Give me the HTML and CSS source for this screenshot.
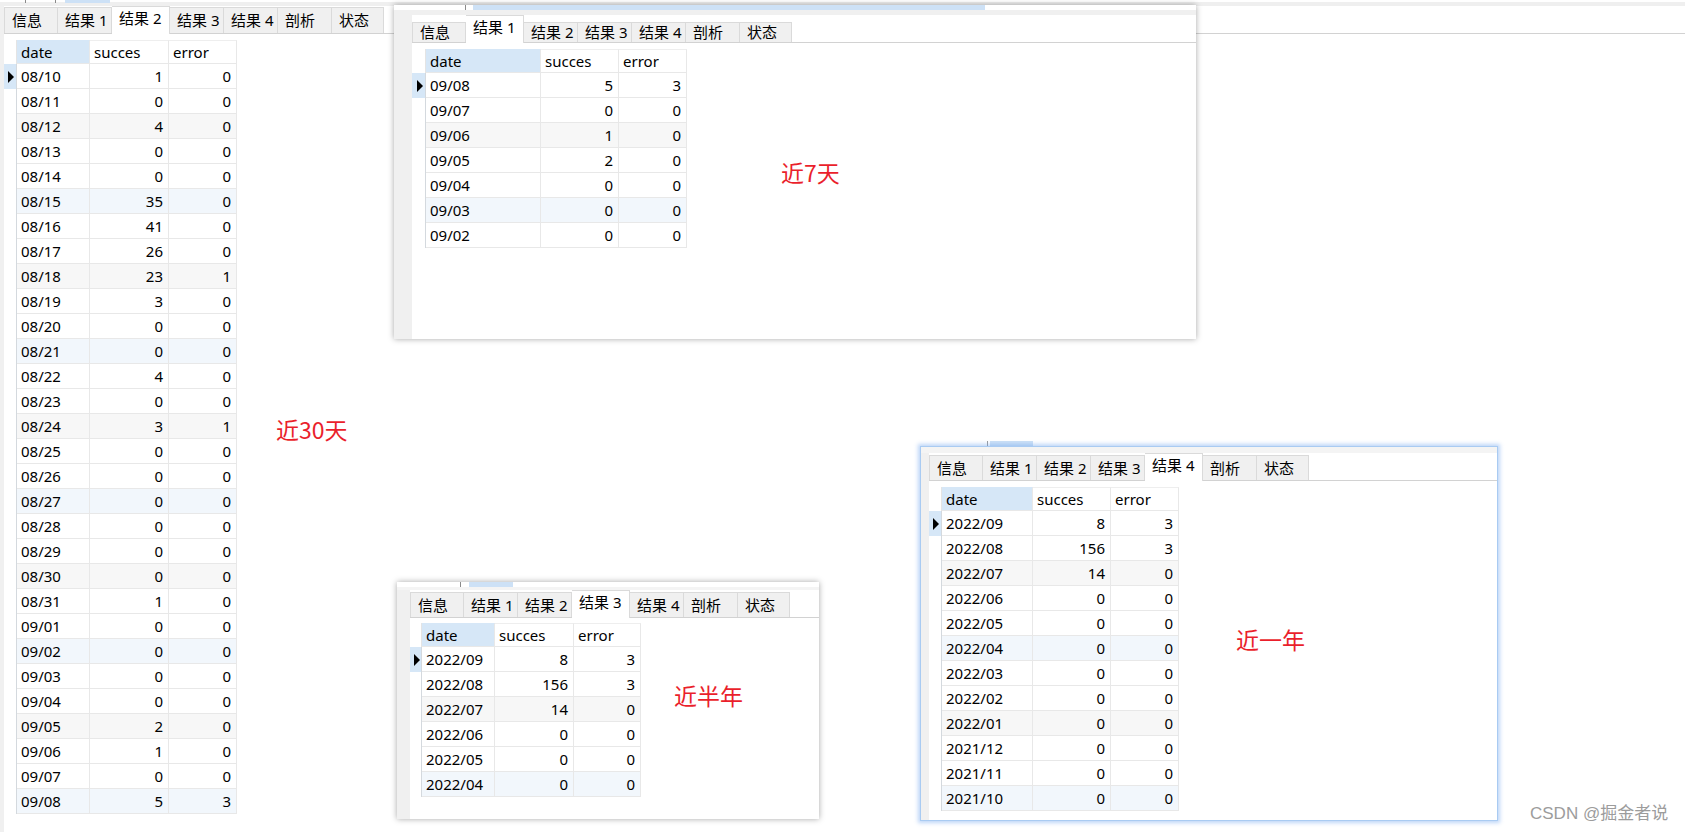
FILE: index.html
```html
<!DOCTYPE html>
<html lang="zh">
<head>
<meta charset="utf-8">
<title>查询结果</title>
<link rel="stylesheet" href="styles.css">
</head>
<body>
<div class="base">
  <div class="remnant">
    <span class="rm-line l1"></span><span class="rm-line l2"></span><span class="rm-blue b0"></span>
  </div>
  <div class="bbody">
    <div class="lstrip"></div>
    <div class="bmain">
      <div class="tabbar tb-base">
        <div class="tab">信息</div><div class="tab">结果 1</div><div class="tab on">结果 2</div><div class="tab">结果 3</div><div class="tab">结果 4</div><div class="tab">剖析</div><div class="tab last">状态</div>
      </div>
      <div class="tbl t30">
        <div class="row head"><div class="gut"></div><div class="c sel">date</div><div class="c">succes</div><div class="c">error</div></div>
        <div class="row"><div class="gut cur"><i class="arrow"></i></div><div class="c">08/10</div><div class="c n">1</div><div class="c n">0</div></div>
        <div class="row"><div class="gut"></div><div class="c">08/11</div><div class="c n">0</div><div class="c n">0</div></div>
        <div class="row sg"><div class="gut"></div><div class="c">08/12</div><div class="c n">4</div><div class="c n">0</div></div>
        <div class="row"><div class="gut"></div><div class="c">08/13</div><div class="c n">0</div><div class="c n">0</div></div>
        <div class="row"><div class="gut"></div><div class="c">08/14</div><div class="c n">0</div><div class="c n">0</div></div>
        <div class="row sb"><div class="gut"></div><div class="c">08/15</div><div class="c n">35</div><div class="c n">0</div></div>
        <div class="row"><div class="gut"></div><div class="c">08/16</div><div class="c n">41</div><div class="c n">0</div></div>
        <div class="row"><div class="gut"></div><div class="c">08/17</div><div class="c n">26</div><div class="c n">0</div></div>
        <div class="row sg"><div class="gut"></div><div class="c">08/18</div><div class="c n">23</div><div class="c n">1</div></div>
        <div class="row"><div class="gut"></div><div class="c">08/19</div><div class="c n">3</div><div class="c n">0</div></div>
        <div class="row"><div class="gut"></div><div class="c">08/20</div><div class="c n">0</div><div class="c n">0</div></div>
        <div class="row sb"><div class="gut"></div><div class="c">08/21</div><div class="c n">0</div><div class="c n">0</div></div>
        <div class="row"><div class="gut"></div><div class="c">08/22</div><div class="c n">4</div><div class="c n">0</div></div>
        <div class="row"><div class="gut"></div><div class="c">08/23</div><div class="c n">0</div><div class="c n">0</div></div>
        <div class="row sg"><div class="gut"></div><div class="c">08/24</div><div class="c n">3</div><div class="c n">1</div></div>
        <div class="row"><div class="gut"></div><div class="c">08/25</div><div class="c n">0</div><div class="c n">0</div></div>
        <div class="row"><div class="gut"></div><div class="c">08/26</div><div class="c n">0</div><div class="c n">0</div></div>
        <div class="row sb"><div class="gut"></div><div class="c">08/27</div><div class="c n">0</div><div class="c n">0</div></div>
        <div class="row"><div class="gut"></div><div class="c">08/28</div><div class="c n">0</div><div class="c n">0</div></div>
        <div class="row"><div class="gut"></div><div class="c">08/29</div><div class="c n">0</div><div class="c n">0</div></div>
        <div class="row sg"><div class="gut"></div><div class="c">08/30</div><div class="c n">0</div><div class="c n">0</div></div>
        <div class="row"><div class="gut"></div><div class="c">08/31</div><div class="c n">1</div><div class="c n">0</div></div>
        <div class="row"><div class="gut"></div><div class="c">09/01</div><div class="c n">0</div><div class="c n">0</div></div>
        <div class="row sb"><div class="gut"></div><div class="c">09/02</div><div class="c n">0</div><div class="c n">0</div></div>
        <div class="row"><div class="gut"></div><div class="c">09/03</div><div class="c n">0</div><div class="c n">0</div></div>
        <div class="row"><div class="gut"></div><div class="c">09/04</div><div class="c n">0</div><div class="c n">0</div></div>
        <div class="row sg"><div class="gut"></div><div class="c">09/05</div><div class="c n">2</div><div class="c n">0</div></div>
        <div class="row"><div class="gut"></div><div class="c">09/06</div><div class="c n">1</div><div class="c n">0</div></div>
        <div class="row"><div class="gut"></div><div class="c">09/07</div><div class="c n">0</div><div class="c n">0</div></div>
        <div class="row sb"><div class="gut"></div><div class="c">09/08</div><div class="c n">5</div><div class="c n">3</div></div>
      </div>
    </div>
  </div>
</div>

<div class="note n30">近30天</div>

<!-- 近7天 window -->
<div class="win w7">
  <div class="wtop"><span class="rm-line"></span><span class="rm-blue"></span></div>
  <div class="wband"></div>
  <div class="wbody">
    <div class="wstrip"></div>
    <div class="wmain">
      <div class="tabbar">
        <div class="tab">信息</div><div class="tab on">结果 1</div><div class="tab">结果 2</div><div class="tab">结果 3</div><div class="tab">结果 4</div><div class="tab">剖析</div><div class="tab last">状态</div>
      </div>
      <div class="tbl t7">
        <div class="row head"><div class="gut"></div><div class="c sel">date</div><div class="c">succes</div><div class="c">error</div></div>
        <div class="row"><div class="gut cur"><i class="arrow"></i></div><div class="c">09/08</div><div class="c n">5</div><div class="c n">3</div></div>
        <div class="row"><div class="gut"></div><div class="c">09/07</div><div class="c n">0</div><div class="c n">0</div></div>
        <div class="row sg"><div class="gut"></div><div class="c">09/06</div><div class="c n">1</div><div class="c n">0</div></div>
        <div class="row"><div class="gut"></div><div class="c">09/05</div><div class="c n">2</div><div class="c n">0</div></div>
        <div class="row"><div class="gut"></div><div class="c">09/04</div><div class="c n">0</div><div class="c n">0</div></div>
        <div class="row sb"><div class="gut"></div><div class="c">09/03</div><div class="c n">0</div><div class="c n">0</div></div>
        <div class="row"><div class="gut"></div><div class="c">09/02</div><div class="c n">0</div><div class="c n">0</div></div>
      </div>
    </div>
  </div>
</div>
<div class="note n7">近7天</div>

<!-- 近半年 window -->
<div class="win w6">
  <div class="wtop"><span class="rm-line"></span><span class="rm-blue"></span></div>
  <div class="wband"></div>
  <div class="wbody">
    <div class="wstrip"></div>
    <div class="wmain">
      <div class="tabbar">
        <div class="tab">信息</div><div class="tab">结果 1</div><div class="tab">结果 2</div><div class="tab on">结果 3</div><div class="tab">结果 4</div><div class="tab">剖析</div><div class="tab last">状态</div>
      </div>
      <div class="tbl t6">
        <div class="row head"><div class="gut"></div><div class="c sel">date</div><div class="c">succes</div><div class="c">error</div></div>
        <div class="row"><div class="gut cur"><i class="arrow"></i></div><div class="c">2022/09</div><div class="c n">8</div><div class="c n">3</div></div>
        <div class="row"><div class="gut"></div><div class="c">2022/08</div><div class="c n">156</div><div class="c n">3</div></div>
        <div class="row sg"><div class="gut"></div><div class="c">2022/07</div><div class="c n">14</div><div class="c n">0</div></div>
        <div class="row"><div class="gut"></div><div class="c">2022/06</div><div class="c n">0</div><div class="c n">0</div></div>
        <div class="row"><div class="gut"></div><div class="c">2022/05</div><div class="c n">0</div><div class="c n">0</div></div>
        <div class="row sb"><div class="gut"></div><div class="c">2022/04</div><div class="c n">0</div><div class="c n">0</div></div>
      </div>
    </div>
  </div>
</div>
<div class="note n6">近半年</div>

<!-- 近一年 window -->
<div class="rm-year"><span class="rm-line"></span><span class="rm-blue"></span></div>
<div class="win w1">
  <div class="wband"></div>
  <div class="wbody">
    <div class="wstrip"></div>
    <div class="wmain">
      <div class="tabbar">
        <div class="tab">信息</div><div class="tab">结果 1</div><div class="tab">结果 2</div><div class="tab">结果 3</div><div class="tab on">结果 4</div><div class="tab">剖析</div><div class="tab last">状态</div>
      </div>
      <div class="tbl t1">
        <div class="row head"><div class="gut"></div><div class="c sel">date</div><div class="c">succes</div><div class="c">error</div></div>
        <div class="row"><div class="gut cur"><i class="arrow"></i></div><div class="c">2022/09</div><div class="c n">8</div><div class="c n">3</div></div>
        <div class="row"><div class="gut"></div><div class="c">2022/08</div><div class="c n">156</div><div class="c n">3</div></div>
        <div class="row sg"><div class="gut"></div><div class="c">2022/07</div><div class="c n">14</div><div class="c n">0</div></div>
        <div class="row"><div class="gut"></div><div class="c">2022/06</div><div class="c n">0</div><div class="c n">0</div></div>
        <div class="row"><div class="gut"></div><div class="c">2022/05</div><div class="c n">0</div><div class="c n">0</div></div>
        <div class="row sb"><div class="gut"></div><div class="c">2022/04</div><div class="c n">0</div><div class="c n">0</div></div>
        <div class="row"><div class="gut"></div><div class="c">2022/03</div><div class="c n">0</div><div class="c n">0</div></div>
        <div class="row"><div class="gut"></div><div class="c">2022/02</div><div class="c n">0</div><div class="c n">0</div></div>
        <div class="row sg"><div class="gut"></div><div class="c">2022/01</div><div class="c n">0</div><div class="c n">0</div></div>
        <div class="row"><div class="gut"></div><div class="c">2021/12</div><div class="c n">0</div><div class="c n">0</div></div>
        <div class="row"><div class="gut"></div><div class="c">2021/11</div><div class="c n">0</div><div class="c n">0</div></div>
        <div class="row sb"><div class="gut"></div><div class="c">2021/10</div><div class="c n">0</div><div class="c n">0</div></div>
      </div>
    </div>
  </div>
</div>
<div class="note n1">近一年</div>

<div class="watermark">CSDN @掘金者说</div>
</body>
</html>
```

FILE: styles.css
```css
* { box-sizing: border-box; }

body {
  margin: 0;
  width: 1685px;
  height: 832px;
  overflow: hidden;
  position: relative;
  background: #fff;
  color: #000;
  font-family: "Noto Sans", "Noto Sans CJK SC", sans-serif;
  font-size: 15px;
}

/* ---------- base (近30天) ---------- */
.base {
  height: 832px;
  display: flex;
  flex-direction: column;
}
.remnant {
  position: relative;
  height: 6px;
  flex: none;
  background: linear-gradient(#fff 0 2px, #efefef 2px 6px);
}
.rm-line {
  position: absolute;
  top: 0;
  width: 1px;
  height: 3px;
  background: #8a8a8a;
}
.rm-blue {
  position: absolute;
  top: 0;
  height: 3px;
  background: #cde1f6;
}
.remnant .l1 { left: 25px; }
.remnant .l2 { left: 55px; }
.remnant .b0 { left: 65px; width: 45px; }

.bbody {
  flex: 1;
  display: flex;
}
.lstrip {
  width: 4px;
  flex: none;
  background: #f0f0f0;
}
.bmain {
  flex: 1;
  display: flex;
  flex-direction: column;
}

/* ---------- tabs ---------- */
.tabbar {
  --th: 20px;
  --ah: 27px;
  display: flex;
  align-items: flex-end;
  height: 28px;
  flex: none;
  border-bottom: 1px solid #d2d2d2;
}
.tb-base {
  --th: 26px;
  --ah: 27px;
}
.tab {
  width: 54px;
  height: var(--th);
  flex: none;
  padding-left: 7px;
  background: #f0f0f0;
  border: 1px solid #dadada;
  border-bottom: 0;
  border-left: 0;
  font-size: 15px;
  line-height: calc(var(--th) - 1px);
  white-space: nowrap;
  overflow: hidden;
}
.tab:first-child { border-left: 1px solid #dadada; }
.tab.last { width: 52px; }
.tab.on {
  width: 58px;
  height: calc(var(--ah) + 1px);
  margin-bottom: -1px;
  background: #fff;
  line-height: calc(var(--ah) - 4px);
  position: relative;
  z-index: 1;
}

/* ---------- grids ---------- */
.tbl {
  --g: 13px;
  --c1: 73px;
  --c2: 79px;
  --c3: 68px;
  padding-top: 6px;
}
.t7 { --g: 14px; --c1: 115px; --c2: 78px; --c3: 68px; }
.t6 { --g: 12px; --c1: 73px; --c2: 79px; --c3: 67px; padding-top: 5px; }
.t1 { --g: 13px; --c1: 91px; --c2: 78px; --c3: 68px; }

.row {
  display: flex;
  height: 25px;
}
.row.head { height: 24px; }
.row > :nth-child(1) { width: var(--g); }
.row > :nth-child(2) { width: var(--c1); }
.row > :nth-child(3) { width: var(--c2); }
.row > :nth-child(4) { width: var(--c3); }

.gut {
  flex: none;
  border-right: 1px solid #d4d9de;
  display: flex;
  align-items: center;
  justify-content: center;
}
.row.head .gut { border-right-color: #e4e4e4; }
.gut.cur { background: #d6e7f7; }
.arrow {
  display: block;
  width: 0;
  height: 0;
  border-left: 6px solid #000;
  border-top: 6px solid transparent;
  border-bottom: 6px solid transparent;
  margin-left: 2px;
}
.c {
  flex: none;
  padding: 0 4px;
  border-right: 1px solid #e8e8e8;
  border-bottom: 1px solid #e8e8e8;
  line-height: 24px;
  white-space: nowrap;
}
.row.head .c { line-height: 23px; border-top: 1px solid #eeeeee; }
.c.sel { background: #d6e7f7; border-top-color: #d6e7f7 !important; }
.c.n { text-align: right; padding-right: 5px; }
.row.sg .c { background: #f7f7f7; }
.row.sb .c { background: #f2f7fc; }

/* ---------- floating windows ---------- */
.win {
  position: absolute;
  background: #fff;
  display: flex;
  flex-direction: column;
  overflow: hidden;
  box-shadow: 0 0 6px rgba(0, 0, 0, 0.35);
}
.wtop {
  position: relative;
  height: 5px;
  flex: none;
  background: #fff;
}
.wtop .rm-line { height: 5px; }
.wtop .rm-blue { height: 5px; }
.wband {
  height: 5px;
  flex: none;
  background: #f0f0f0;
}
.wbody {
  flex: 1;
  display: flex;
}
.wstrip {
  flex: none;
  width: 18px;
  background: #f0f0f0;
}
.wmain {
  flex: 1;
  display: flex;
  flex-direction: column;
}

/* 近7天 */
.w7 { left: 394px; top: 5px; width: 802px; height: 334px; }
.w7 .wtop .rm-line { left: 71px; }
.w7 .wtop .rm-blue { left: 79px; width: 512px; }
.w7 .tabbar { --th: 20px; --ah: 27px; height: 28px; }

/* 近半年 */
.w6 { left: 397px; top: 582px; width: 422px; height: 237px; }
.w6 .wtop .rm-line { left: 63px; }
.w6 .wtop .rm-blue { left: 72px; width: 44px; }
.w6 .wband { height: 3px; background: #f4f4f4; }
.w6 .wstrip { width: 13px; }
.w6 .tabbar { --th: 25px; --ah: 27px; height: 28px; }

/* 近一年 */
.w1 {
  left: 920px;
  top: 446px;
  width: 578px;
  height: 375px;
  border: 1px solid #a9cbf2;
  box-shadow: 0 0 4px 2px rgba(110, 165, 240, 0.45);
}
.w1 .wband { height: 6px; background: #f4f4f4; }
.w1 .wstrip { width: 8px; }
.w1 .tabbar { --th: 25px; --ah: 27px; height: 28px; }

.rm-year {
  position: absolute;
  left: 940px;
  top: 441px;
  width: 100px;
  height: 5px;
}
.rm-year .rm-line { left: 47px; height: 5px; background: #9a9a9a; }
.rm-year .rm-blue { left: 50px; width: 43px; height: 5px; }

/* ---------- annotations ---------- */
.note {
  position: absolute;
  color: #ea1f2c;
  font-family: "Noto Sans CJK SC", "Noto Sans", sans-serif;
  font-size: 23px;
  line-height: 23px;
  white-space: nowrap;
}
.n30 { left: 276px; top: 418px; }
.n7 { left: 781px; top: 161px; }
.n6 { left: 674px; top: 684px; }
.n1 { left: 1236px; top: 628px; }

.watermark {
  position: absolute;
  left: 1530px;
  top: 803px;
  color: #9c9c9c;
  font-family: "Liberation Sans", "Noto Sans CJK SC", sans-serif;
  font-size: 17px;
  line-height: 22px;
  white-space: nowrap;
}
```
